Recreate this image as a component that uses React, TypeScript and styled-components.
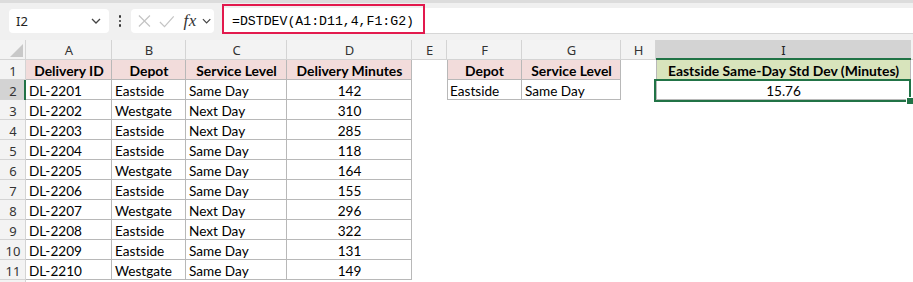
import React from 'react';
import styled, {createGlobalStyle} from 'styled-components';

const GlobalStyle = createGlobalStyle`
    html, body {
        margin: 0;
        padding: 0;
        background: #ffffff;
        overflow: hidden;
    }
`;

const COLUMNS = ['A', 'B', 'C', 'D', 'E', 'F', 'G', 'H', 'I'];
const BORDER = '#b8b8b8';
const GREEN = '#217346';

const rows = [
    ['DL-2201', 'Eastside', 'Same Day', '142'],
    ['DL-2202', 'Westgate', 'Next Day', '310'],
    ['DL-2203', 'Eastside', 'Next Day', '285'],
    ['DL-2204', 'Eastside', 'Same Day', '118'],
    ['DL-2205', 'Westgate', 'Same Day', '164'],
    ['DL-2206', 'Eastside', 'Same Day', '155'],
    ['DL-2207', 'Westgate', 'Next Day', '296'],
    ['DL-2208', 'Eastside', 'Next Day', '322'],
    ['DL-2209', 'Eastside', 'Same Day', '131'],
    ['DL-2210', 'Westgate', 'Same Day', '149'],
];

const Chevron = () => (
    <svg width='10' height='6' viewBox='0 0 10 6'>
        <path d='M1 1 L5 5 L9 1' fill='none' stroke='#444' strokeWidth='1.3'/>
    </svg>
);

const App = () => {
    return (
        <>
            <GlobalStyle/>
            <Window>
                <FormulaBar>
                    <NameBox>
                        <span>I2</span>
                        <Chevron/>
                    </NameBox>
                    <Dots>
                        <i/><i/><i/>
                    </Dots>
                    <FxBox>
                        <svg width='14' height='14' viewBox='0 0 14 14'>
                            <path d='M1 1 L13 13 M13 1 L1 13' stroke='#c4c4c4' strokeWidth='1.3'/>
                        </svg>
                        <svg width='17' height='13' viewBox='0 0 17 13'>
                            <path d='M1 7 L6 12 L16 1' fill='none' stroke='#c4c4c4' strokeWidth='1.3'/>
                        </svg>
                        <FxLabel>fx</FxLabel>
                        <Chevron/>
                    </FxBox>
                    <FormulaField>
                        <FormulaText>=DSTDEV(A1:D11,4,F1:G2)</FormulaText>
                        <Highlight/>
                    </FormulaField>
                </FormulaBar>
                <Sheet>
                    <Corner>
                        <svg width='13' height='13' viewBox='0 0 13 13'>
                            <path d='M13 0 L13 13 L0 13 Z' fill='#c8c8c8'/>
                        </svg>
                    </Corner>
                    {COLUMNS.map((col) => (
                        <ColHeader
                            key={col}
                            $selected={col === 'I'}
                        >
                            {col}
                        </ColHeader>
                    ))}
                    <ColHeader/>

                    <RowHeader>1</RowHeader>
                    <Cell $box={true} $fill='#f2dcdb' $bold={true} $align='center'>Delivery ID</Cell>
                    <Cell $box={true} $fill='#f2dcdb' $bold={true} $align='center'>Depot</Cell>
                    <Cell $box={true} $fill='#f2dcdb' $bold={true} $align='center'>Service Level</Cell>
                    <Cell $box={true} $fill='#f2dcdb' $bold={true} $align='center'>Delivery Minutes</Cell>
                    <Cell/>
                    <Cell $box={true} $edge={true} $fill='#f2dcdb' $bold={true} $align='center'>Depot</Cell>
                    <Cell $box={true} $fill='#f2dcdb' $bold={true} $align='center'>Service Level</Cell>
                    <Cell/>
                    <Cell $box={true} $edge={true} $fill='#d8e4bc' $bold={true} $align='center'>Eastside Same-Day Std Dev (Minutes)</Cell>
                    <Cell/>

                    {rows.map((row, i) => (
                        <React.Fragment key={row[0]}>
                            <RowHeader $selected={i === 0}>{i + 2}</RowHeader>
                            <Cell $box={true}>{row[0]}</Cell>
                            <Cell $box={true}>{row[1]}</Cell>
                            <Cell $box={true}>{row[2]}</Cell>
                            <Cell $box={true} $align='center'>{row[3]}</Cell>
                            <Cell/>
                            {i === 0 ? (
                                <>
                                    <Cell $box={true} $edge={true}>Eastside</Cell>
                                    <Cell $box={true}>Same Day</Cell>
                                    <Cell/>
                                    <Cell $box={true} $edge={true} $align='center'>
                                        15.76
                                        <Selection><Handle/></Selection>
                                    </Cell>
                                </>
                            ) : (
                                <>
                                    <Cell/>
                                    <Cell/>
                                    <Cell/>
                                    <Cell/>
                                </>
                            )}
                            <Cell/>
                        </React.Fragment>
                    ))}
                    <RowHeader/>
                </Sheet>
            </Window>
        </>
    );
};

const Window = styled.div`
    width: 913px;
    height: 282px;
    overflow: hidden;
    background: #ffffff;
`;

const FormulaBar = styled.div`
    display: flex;
    align-items: flex-start;
    height: 40px;
    box-sizing: border-box;
    padding-top: 6px;
    background: #f0f0f0;
    border-top: 3px solid #dcdcdc;
`;

const NameBox = styled.div`
    display: flex;
    align-items: center;
    justify-content: space-between;
    box-sizing: border-box;
    width: 100px;
    height: 24px;
    margin-left: 9px;
    padding: 0 8px 0 7px;
    background: #ffffff;
    border-radius: 4px;
    font-family: 'Noto Sans', 'Open Sans', sans-serif;
    font-size: 13px;
    color: #222;
`;

const Dots = styled.div`
    display: flex;
    flex-direction: column;
    align-items: center;
    justify-content: center;
    gap: 2px;
    width: 22px;
    height: 24px;

    i {
        display: block;
        width: 2.5px;
        height: 2.5px;
        border-radius: 50%;
        background: #333;
    }
`;

const FxBox = styled.div`
    display: flex;
    align-items: center;
    gap: 8px;
    box-sizing: border-box;
    width: 83px;
    height: 24px;
    padding: 0 3px 0 7px;
    background: #ffffff;
    border-radius: 4px;
`;

const FxLabel = styled.span`
    margin-left: 1px;
    margin-right: -3px;
    font-family: 'Liberation Serif', serif;
    font-style: italic;
    font-size: 17px;
    color: #333;
    letter-spacing: 0.5px;
`;

const FormulaField = styled.div`
    position: relative;
    flex: 1;
    display: flex;
    align-items: center;
    height: 25px;
    margin-left: 8px;
    margin-top: -1px;
    background: #ffffff;
    border-bottom: 1px solid #d6d6d6;
`;

const FormulaText = styled.span`
    padding-left: 10px;
    padding-top: 1px;
    font-family: 'Liberation Mono', monospace;
    font-size: 13.2px;
    color: #000;
`;

const Highlight = styled.div`
    position: absolute;
    left: 0;
    top: -4px;
    width: 203px;
    height: 30px;
    box-sizing: border-box;
    border: 2.5px solid #e2194d;
`;

const Sheet = styled.div`
    display: grid;
    grid-template-columns: 26px 86px 74px 101px 125px 35px 75px 99px 35px 255px 1fr;
    grid-auto-rows: 20px;
    font-family: Lato, 'Open Sans', sans-serif;
`;

const HeaderBase = styled.div`
    display: flex;
    align-items: center;
    justify-content: center;
    box-sizing: border-box;
    background: #f3f3f3;
    font-family: 'Noto Sans', 'Open Sans', sans-serif;
    font-size: 13px;
    color: #333;
`;

const Corner = styled(HeaderBase)`
    align-items: flex-end;
    justify-content: flex-end;
    padding: 0 3px 3px 0;
    box-shadow: inset -1px -1px 0 #d4d4d4;
`;

const ColHeader = styled(HeaderBase)<{ $selected?: boolean }>`
    background: ${(p) => (p.$selected ? '#d3d3d3' : '#f3f3f3')};
    box-shadow: ${(p) => (p.$selected ? `inset 0 -2px 0 ${GREEN}` : 'inset -1px -1px 0 #d4d4d4')};
    color: ${(p) => (p.$selected ? '#222' : '#333')};
`;

const RowHeader = styled(HeaderBase)<{ $selected?: boolean }>`
    background: ${(p) => (p.$selected ? '#d3d3d3' : '#f3f3f3')};
    box-shadow: ${(p) => (p.$selected ? `inset -2px 0 0 ${GREEN}, inset 0 -1px 0 #d4d4d4` : 'inset -1px -1px 0 #d4d4d4')};
    padding-top: 1px;
`;

const Cell = styled.div<{ $box?: boolean, $edge?: boolean, $fill?: string, $bold?: boolean, $align?: string }>`
    position: relative;
    display: flex;
    align-items: center;
    justify-content: ${(p) => (p.$align === 'center' ? 'center' : 'flex-start')};
    box-sizing: border-box;
    padding: 1px 3px 0;
    white-space: nowrap;
    background: ${(p) => p.$fill || '#ffffff'};
    box-shadow: ${(p) => {
        if (!p.$box) {
            return 'none';
        }
        return p.$edge ? `inset -1px -1px 0 ${BORDER}, inset 1px 0 0 ${BORDER}` : `inset -1px -1px 0 ${BORDER}`;
    }};
    font-size: ${(p) => (p.$bold ? '13.9px' : '13.6px')};
    font-weight: ${(p) => (p.$bold ? 700 : 400)};
    color: #000;
`;

const Selection = styled.div`
    position: absolute;
    left: -2px;
    top: -1px;
    right: 0;
    bottom: -2px;
    border: 2px solid ${GREEN};
    z-index: 2;
    pointer-events: none;
`;

const Handle = styled.div`
    position: absolute;
    right: -4px;
    bottom: -4px;
    width: 6px;
    height: 6px;
    background: ${GREEN};
    box-shadow: 0 0 0 1px #ffffff;
`;

export default App;
